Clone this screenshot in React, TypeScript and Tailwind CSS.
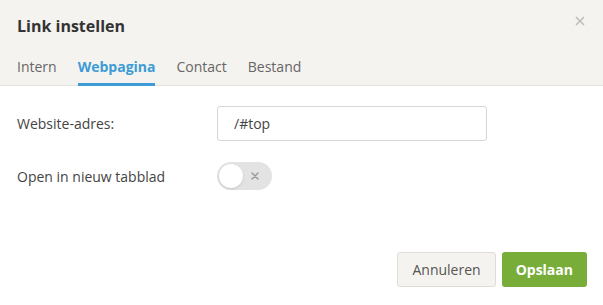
import React, { useState } from "react";

const tabs = ["Intern", "Webpagina", "Contact", "Bestand"];

const Toggle: React.FC<{ on: boolean; onChange: () => void }> = ({ on, onChange }) => {
  return (
    <button
      onClick={onChange}
      className="relative w-[55px] h-[28px] rounded-full bg-[#e3e3e3] flex items-center"
    >
      <span
        className={
          on
            ? "absolute right-[2px] top-[2px] w-[24px] h-[24px] rounded-full bg-white shadow-sm"
            : "absolute left-[2px] top-[2px] w-[24px] h-[24px] rounded-full bg-white shadow-sm"
        }
      />
      {!on && (
        <svg className="absolute left-[34px] top-[10px] w-[8px] h-[8px]" viewBox="0 0 8 8">
          <path d="M1 1l6 6M7 1L1 7" stroke="#999" strokeWidth="1.5" strokeLinecap="round" />
        </svg>
      )}
    </button>
  );
};

export default function App() {
  const [active, setActive] = useState("Webpagina");
  const [newTab, setNewTab] = useState(false);

  return (
    <div
      className="w-[603px] h-[305px] bg-white flex flex-col text-[#333]"
      style={{ fontFamily: "'Open Sans', 'Liberation Sans', sans-serif" }}
    >
      {/* Header */}
      <div className="relative bg-[#f5f3ef] border-b border-[#e2e0dc] pl-[17px]">
        <h2 className="pt-[13px] text-[16px] leading-[26px] font-bold text-[#333]">Link instellen</h2>
        <button className="absolute right-[18px] top-[16px] w-[10px] h-[10px]">
          <svg viewBox="0 0 10 10" className="w-[10px] h-[10px]">
            <path d="M1 1l8 8M9 1L1 9" stroke="#bbb" strokeWidth="1.5" />
          </svg>
        </button>
        <div className="flex gap-[21px] mt-[18px]">
          {tabs.map((t) => (
            <button
              key={t}
              onClick={() => setActive(t)}
              className={
                t === active
                  ? "text-[14px] leading-[20px] pb-[6px] -mb-px border-b-[3px] border-[#3d9bd6] font-bold text-[#3d9bd6]"
                  : "text-[14px] leading-[20px] pb-[6px] -mb-px border-b-[3px] border-transparent text-[#666]"
              }
            >
              {t}
            </button>
          ))}
        </div>
      </div>

      {/* Body */}
      <div className="flex flex-col gap-[21px] pt-[20px] pl-[17px]">
        <div className="flex items-center">
          <label className="w-[200px] text-[14px] text-[#444]">Website-adres:</label>
          <input
            defaultValue="/#top"
            className="w-[270px] h-[35px] border border-[#d6d6d6] rounded-[3px] px-[16px] text-[14px] text-[#444] outline-none"
          />
        </div>
        <div className="flex items-center">
          <label className="w-[200px] text-[14px] text-[#444]">Open in nieuw tabblad</label>
          <Toggle on={newTab} onChange={() => setNewTab(!newTab)} />
        </div>
      </div>

      {/* Footer */}
      <div className="mt-auto mb-[18px] mr-[16px] flex justify-end gap-[6px]">
        <button className="h-[35px] px-[14px] rounded-[3px] border border-[#e0ddd8] bg-[#f5f3ef] text-[14px] text-[#555]">
          Annuleren
        </button>
        <button className="h-[35px] px-[14px] rounded-[3px] bg-[#78ad3a] text-[14px] font-bold text-white">
          Opslaan
        </button>
      </div>
    </div>
  );
}
